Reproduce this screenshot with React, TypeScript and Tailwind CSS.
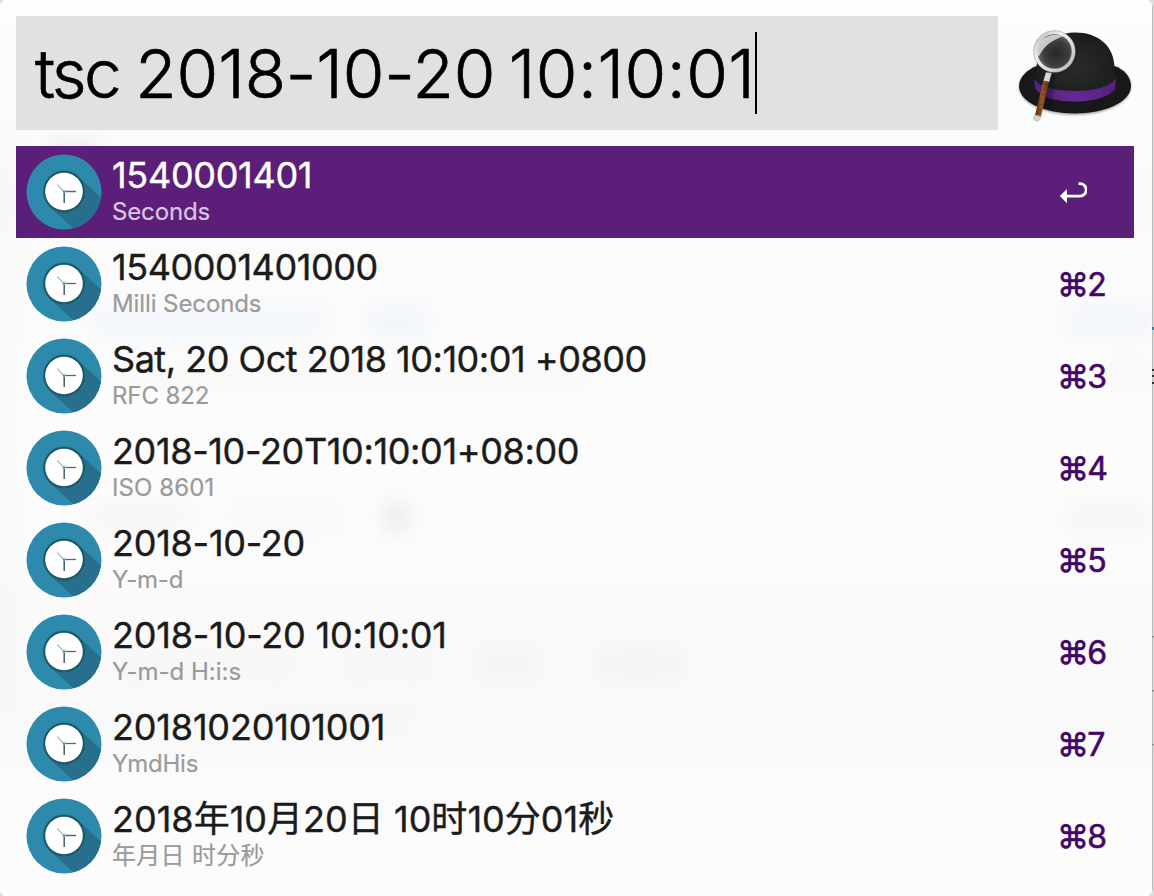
type Result = { title: string; subtitle: string; titleClass: string; subtitleClass: string };

const results: Result[] = [
  { title: '1540001401', subtitle: 'Seconds', titleClass: 'tracking-[-0.3px]', subtitleClass: 'tracking-[-0.15px]' },
  { title: '1540001401000', subtitle: 'Milli Seconds', titleClass: 'tracking-[-0.42px]', subtitleClass: 'tracking-[-0.1px]' },
  { title: 'Sat, 20 Oct 2018 10:10:01 +0800', subtitle: 'RFC 822', titleClass: 'tracking-[-0.47px]', subtitleClass: 'tracking-[-0.1px]' },
  { title: '2018-10-20T10:10:01+08:00', subtitle: 'ISO 8601', titleClass: 'tracking-[-0.36px]', subtitleClass: 'tracking-[0.1px]' },
  { title: '2018-10-20', subtitle: 'Y-m-d', titleClass: 'tracking-[-0.25px]', subtitleClass: 'tracking-[-0.2px]' },
  { title: '2018-10-20 10:10:01', subtitle: 'Y-m-d H:i:s', titleClass: 'tracking-[-0.19px]', subtitleClass: 'tracking-[0px]' },
  { title: '20181020101001', subtitle: 'YmdHis', titleClass: 'tracking-[-0.17px]', subtitleClass: 'tracking-[-0.2px]' },
  { title: '2018年10月20日 10时10分01秒', subtitle: '年月日 时分秒', titleClass: 'tracking-[0.02px]', subtitleClass: 'tracking-[0.3px]' },
];

function ClockIcon() {
  return (
    <svg className="h-[76px] w-[76px] shrink-0" viewBox="0 0 76 76">
      <defs>
        <clipPath id="disc">
          <circle cx="38" cy="38" r="37.5" />
        </clipPath>
      </defs>
      <circle cx="38" cy="38" r="37.5" fill="#2e8aac" />
      <path d="M53 23L86 54L60 86L23 52Z" fill="#286f8d" clipPath="url(#disc)" />
      <circle cx="38" cy="37.500" r="21" fill="#1d5a6c" />
      <circle cx="38" cy="37.500" r="18.800" fill="#fff" />
      <path d="M31 30.500L38 37.500" stroke="#9dbcc4" strokeWidth="1.1" />
      <path d="M38 37.500H50" stroke="#566970" strokeWidth="1.3" />
      <path d="M38.200 37.500V49" stroke="#4b5b63" strokeWidth="1.5" />
      <circle cx="38" cy="37.500" r="1.600" fill="#6fa9b8" />
    </svg>
  );
}

function HatLogo() {
  return (
    <svg className="h-[114px] w-[136px] shrink-0" viewBox="0 16 136 114">
      <defs>
        <radialGradient id="dome" cx="0.5" cy="0.55" r="0.65">
          <stop offset="0" stopColor="#2a2c2b" />
          <stop offset="1" stopColor="#181a19" />
        </radialGradient>
        <linearGradient id="band" x1="0" x2="1">
          <stop offset="0" stopColor="#54207c" />
          <stop offset="0.5" stopColor="#672993" />
          <stop offset="1" stopColor="#54207c" />
        </linearGradient>
        <radialGradient id="lens" cx="0.55" cy="0.55" r="0.55">
          <stop offset="0" stopColor="#262727" />
          <stop offset="0.6" stopColor="#3c3d3d" />
          <stop offset="1" stopColor="#777" />
        </radialGradient>
        <linearGradient id="rim" x1="0" y1="0" x2="1" y2="1">
          <stop offset="0" stopColor="#b5b5b5" />
          <stop offset="0.35" stopColor="#f1f1f1" />
          <stop offset="0.7" stopColor="#d8d8d8" />
          <stop offset="1" stopColor="#b0b0b0" />
        </linearGradient>
        <linearGradient id="wood" x1="0" x2="1">
          <stop offset="0" stopColor="#5a3010" />
          <stop offset="0.5" stopColor="#96592a" />
          <stop offset="1" stopColor="#5a3010" />
        </linearGradient>
        <filter id="soft" x="-20%" y="-20%" width="140%" height="140%">
          <feGaussianBlur stdDeviation="1.2" />
        </filter>
        <filter id="glint" x="-20%" y="-20%" width="140%" height="140%">
          <feGaussianBlur stdDeviation="0.5" />
        </filter>
      </defs>
      <path d="M19 87C19 77 28 69 37 66H114C124 69 131 77 131 87C131 103 105 115 75 115C44 115 19 103 19 87Z" fill="#555" opacity="0.5" filter="url(#soft)" />
      <path d="M19 86C19 77 28 69 37 66H114C124 69 131 77 131 86C131 102 105 113.500 75 113.500C44 113.500 19 102 19 86Z" fill="#171817" />
      <path d="M35 82L37 62C39 43 52 34 74 32.500C97 32 114 45 114.500 67L116 84C106 99 47 101 35 82Z" fill="url(#dome)" />
      <path d="M34 78C41 95.500 109 95.500 116 77.500L115 89C104 105.500 45 106.500 35 88Z" fill="url(#band)" />
      <path d="M53 75L46 108" stroke="#080808" strokeWidth="8" opacity="0.35" filter="url(#soft)" />
      <circle cx="56" cy="53" r="20" fill="#000" opacity="0.4" filter="url(#soft)" />
      <circle cx="54.500" cy="51.500" r="19" fill="url(#lens)" />
      <path d="M36 55C35 40 48 32 64 36C52 40 44 46 39 56Z" fill="#e7e7e7" opacity="0.8" filter="url(#glint)" />
      <circle cx="54.500" cy="51.500" r="19" fill="none" stroke="url(#rim)" strokeWidth="3.600" />
      <circle cx="54.500" cy="51.500" r="20.900" fill="none" stroke="#8c8c8c" strokeWidth="0.5" />
      <path d="M46 72.500L51.500 73L49 82L43.500 81Z" fill="#d8d8d8" stroke="#aaa" strokeWidth="0.4" />
      <path d="M43.500 80.500L49 82L41 116.500L35 115Z" fill="url(#wood)" />
      <path d="M43 84L48 85M42 89L47 90M41 94L46 95M40 99L45 100M38.500 104L43.500 105M37.500 109L42 110" stroke="#5e3514" strokeWidth="0.8" opacity="0.6" />
      <path d="M35 115L41 116.500L39.500 120C38 122 33 120.500 33.500 118Z" fill="#d2d2d2" stroke="#9e9e9e" strokeWidth="0.5" />
    </svg>
  );
}

function ReturnIcon() {
  return (
    <svg className="h-7 w-[30px]" viewBox="1058 179 30 28">
      <path d="M1079.500 183.700H1081A6.200 6.200 0 0 1 1081 196.100H1067" fill="none" stroke="#fff" strokeWidth="2.800" />
      <path d="M1060.800 196.100L1068 189V203.200Z" fill="#fff" />
    </svg>
  );
}

/* Faint shapes of the windows behind, seen through the translucent panel. */
function Backdrop() {
  return (
    <svg className="pointer-events-none absolute inset-0 h-full w-full" viewBox="0 0 1152 896">
      <defs>
        <filter id="haze" x="-50%" y="-150%" width="200%" height="400%" colorInterpolationFilters="sRGB">
          <feGaussianBlur stdDeviation="9" />
        </filter>
        <linearGradient id="sheet" x1="0" y1="0" x2="0" y2="1">
          <stop offset="0" stopColor="#fcfdfd" />
          <stop offset="0.22" stopColor="#fafafa" />
          <stop offset="0.45" stopColor="#fcfcfc" />
          <stop offset="0.62" stopColor="#fbfbfb" />
          <stop offset="0.72" stopColor="#f9f9f9" />
          <stop offset="0.82" stopColor="#f9f9f9" />
          <stop offset="0.88" stopColor="#fbfbfb" />
          <stop offset="1" stopColor="#fbfcfc" />
        </linearGradient>
      </defs>
      <rect width="1152" height="896" fill="url(#sheet)" />
      <g filter="url(#haze)">
        <rect x="0" y="130" width="12" height="580" fill="#f6f6f6" />
        <rect x="50" y="140" width="45" height="14" fill="#ebebeb" />
        <rect x="94" y="308" width="232" height="28" fill="#f3f6fb" />
        <rect x="370" y="308" width="56" height="28" fill="#f1f5fb" />
        <rect x="120" y="368" width="470" height="20" fill="#f8f8f7" />
        <rect x="90" y="504" width="100" height="24" fill="#f6f6f6" />
        <rect x="236" y="504" width="100" height="24" fill="#f7f7f7" />
        <rect x="386" y="503" width="22" height="28" fill="#ebebea" />
        <rect x="120" y="654" width="170" height="22" fill="#f6f6f5" />
        <rect x="344" y="654" width="86" height="22" fill="#f6f6f6" />
        <rect x="478" y="652" width="60" height="24" fill="#f4f4f4" />
        <rect x="600" y="652" width="80" height="24" fill="#f3f3f3" />
        <rect x="270" y="710" width="140" height="18" fill="#f6f6f6" />
        <rect x="1068" y="308" width="84" height="28" fill="#f2f5fb" />
        <rect x="1106" y="364" width="46" height="24" fill="#f7f7f7" />
        <rect x="1068" y="506" width="76" height="24" fill="#f5f5f5" />
      </g>
    </svg>
  );
}

/* Slivers of the page to the right of the panel. */
function EdgeSliver() {
  return (
    <svg className="h-[896px] w-0.5 shrink-0" viewBox="0 0 2 896">
      <rect width="2" height="896" fill="#d9dada" />
      <rect width="0.800" y="6" height="884" fill="#b4b5b5" />
      <rect y="327" width="2" height="3" fill="#3484ab" />
      <rect y="369" width="2" height="2" fill="#333" />
      <rect y="375" width="2" height="2" fill="#333" />
      <rect y="382" width="2" height="2" fill="#333" />
      <rect y="636" width="2" height="1.500" fill="#929292" />
      <rect y="690" width="2" height="1.500" fill="#929292" />
      <rect y="744" width="2" height="1.500" fill="#929292" />
    </svg>
  );
}

export default function App() {
  return (
    <div className="flex h-[896px] w-[1154px] overflow-hidden bg-[#dcdddd] font-['Inter','Noto_Sans_CJK_SC',sans-serif]">
      <div className="relative h-[896px] w-[1152px] shrink-0 overflow-hidden rounded-[6px] bg-[#fbfcfc]">
        <Backdrop />
        <div className="relative flex h-full flex-col gap-4 p-4">
          <header className="flex h-[114px] items-center gap-0.5">
            <div className="flex h-[114px] w-[982px] shrink-0 items-center bg-[#e0e1e1] pl-[19px]">
              <div className="pt-[1px] text-[67.5px] leading-[82px] font-light whitespace-pre text-black [-webkit-text-stroke:0.7px_black]">
                <span className="tracking-[-2.700px]">tsc </span>
                <span className="tracking-[-0.1px] [word-spacing:-5.500px]">2018-10-20 </span>
                <span className="tracking-[0.450px]">10:10:01</span>
              </div>
              <span className="h-[82px] w-0.5 bg-black" />
            </div>
            <HatLogo />
          </header>
          <main className="w-[1118px]">
            {results.map((r, i) => (
              <div key={r.title} className={`flex h-[92px] items-center gap-2.5 pl-2.5 ${i === 0 ? 'bg-[#5c1f79]' : ''}`}>
                <ClockIcon />
                <div className="flex h-full grow flex-col pt-[7px] whitespace-pre">
                  <span className={`h-[43px] text-[36px] leading-[44px] [-webkit-text-stroke:0.4px_currentColor] ${r.titleClass} ${i === 0 ? 'text-white' : 'text-[#1b1b1b]'}`}>{r.title}</span>
                  <span className={`h-[30px] text-[24px] leading-[32px] [-webkit-text-stroke:0.2px_currentColor] ${r.subtitleClass} ${i === 0 ? 'text-[#d9c5e3]' : 'text-[#9a9a9a]'}`}>{r.subtitle}</span>
                </div>
                <div className="w-[77px] pt-0.5 text-[32px] leading-[40px] tracking-[-1.700px] text-[#430766] [-webkit-text-stroke:0.6px_currentColor]">{i === 0 ? <ReturnIcon /> : `⌘${i + 1}`}</div>
              </div>
            ))}
          </main>
        </div>
      </div>
      <EdgeSliver />
    </div>
  );
}
